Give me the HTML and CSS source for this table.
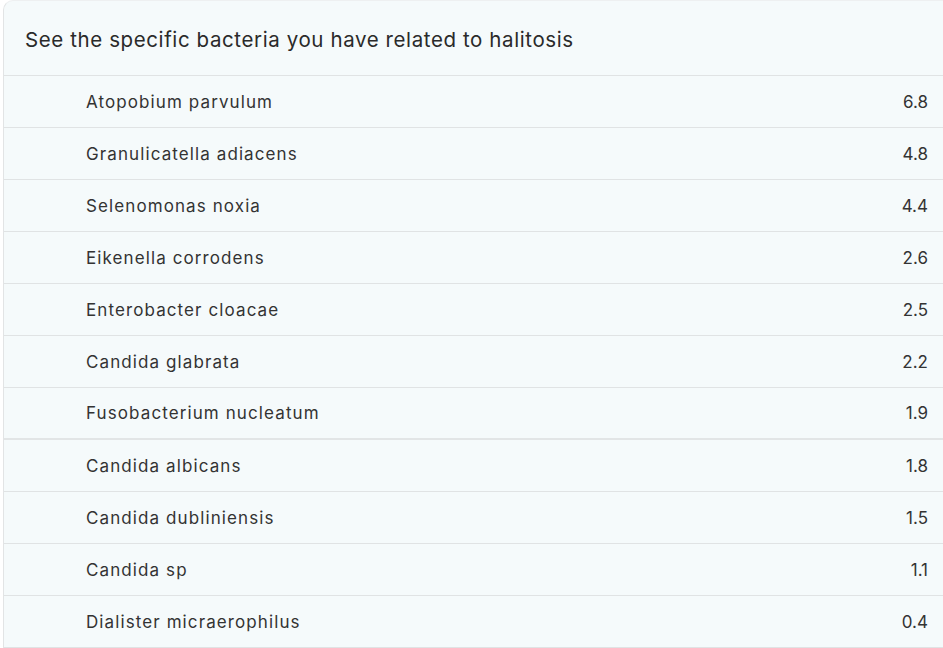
FILE: index.html
```html
<!DOCTYPE html>
<html>
<head>
<meta charset="utf-8">
<link rel="stylesheet" href="styles.css">
</head>
<body>
<div class="card">
  <div class="card-header">See the specific bacteria you have related to halitosis</div>
  <div class="rows">
    <div class="row"><span class="name">Atopobium parvulum</span><span class="val">6.8</span></div>
    <div class="row"><span class="name">Granulicatella adiacens</span><span class="val">4.8</span></div>
    <div class="row"><span class="name">Selenomonas noxia</span><span class="val">4.4</span></div>
    <div class="row"><span class="name">Eikenella corrodens</span><span class="val">2.6</span></div>
    <div class="row"><span class="name">Enterobacter cloacae</span><span class="val">2.5</span></div>
    <div class="row"><span class="name">Candida glabrata</span><span class="val">2.2</span></div>
    <div class="row row-thick"><span class="name">Fusobacterium nucleatum</span><span class="val">1.9</span></div>
    <div class="row"><span class="name">Candida albicans</span><span class="val">1.8</span></div>
    <div class="row"><span class="name">Candida dubliniensis</span><span class="val">1.5</span></div>
    <div class="row"><span class="name">Candida sp</span><span class="val">1.1</span></div>
    <div class="row"><span class="name">Dialister micraerophilus</span><span class="val">0.4</span></div>
  </div>
</div>
</body>
</html>
```
FILE: styles.css
```css
html, body {
  margin: 0;
  padding: 0;
  background: #ffffff;
}
body {
  padding: 0 0 0 3px;
  font-family: "Inter", "Liberation Sans", sans-serif;
  color: #2b2b2b;
  overflow: hidden;
}
.card {
  background: #f5fafb;
  border: 1px solid #e2e4e5;
  border-top-color: #eef0f1;
  border-right: none;
  border-top-left-radius: 10px;
  width: 960px;
}
.card-header {
  height: 75px;
  box-sizing: border-box;
  padding: 27px 0 0 21px;
  font-size: 20.5px;
  line-height: 24px;
  letter-spacing: 0.6px;
  color: #2a2a2a;
  border-bottom: 1px solid #e0e3e4;
  white-space: nowrap;
}
.row {
  display: flex;
  justify-content: space-between;
  align-items: center;
  height: 52px;
  box-sizing: border-box;
  padding: 0 0 0 82px;
  width: 940px;
  font-size: 17px;
  letter-spacing: 1.1px;
  color: #333;
  border-bottom: 1px solid #e0e3e4;
}
.row-thick {
  border-bottom: 2px solid #e2e5e6;
}
.val {
  padding-right: 16px;
  letter-spacing: 0;
}
```
